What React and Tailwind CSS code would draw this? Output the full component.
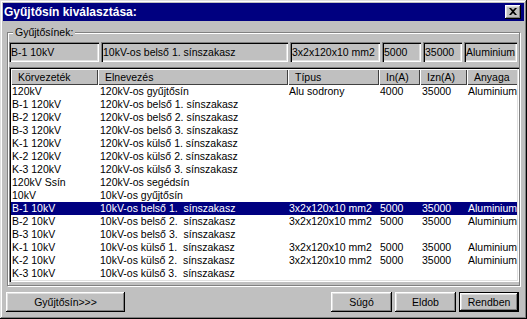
// Gyűjtősín kiválasztása dialog (Win95 style)

const raised =
  'shadow-[inset_-1px_-1px_#000,inset_1px_1px_#fff,inset_-2px_-2px_#808080,inset_2px_2px_#dfdfdf]'
const sunken =
  'shadow-[inset_1px_1px_#808080,inset_2px_2px_#000,inset_-1px_-1px_#fff,inset_-2px_-2px_#dfdfdf]'

const columns = [
  { label: 'Körvezeték', width: 'w-[87px]', pad: 'pl-[1px]' },
  { label: 'Elnevezés', width: 'w-[190px]', pad: 'pl-[2px]' },
  { label: 'Típus', width: 'w-[91px]', pad: 'pl-[1px]' },
  { label: 'In(A)', width: 'w-[41px]', pad: 'pl-[1px]' },
  { label: 'Izn(A)', width: 'w-[47px]', pad: 'pl-[2px]' },
  { label: 'Anyaga', width: 'w-[60px]', pad: 'pl-[1px]' },
]

const sin = ['3x2x120x10 mm2', '5000', '35000', 'Aluminium']

const rows = [
  ['120kV', '120kV-os gyűjtősín', 'Alu sodrony', '4000', '35000', 'Aluminium'],
  ['B-1 120kV', '120kV-os belső 1. sínszakasz'],
  ['B-2 120kV', '120kV-os belső 2. sínszakasz'],
  ['B-3 120kV', '120kV-os belső 3. sínszakasz'],
  ['K-1 120kV', '120kV-os külső 1. sínszakasz'],
  ['K-2 120kV', '120kV-os külső 2. sínszakasz'],
  ['K-3 120kV', '120kV-os külső 3. sínszakasz'],
  ['120kV Ssín', '120kV-os segédsín'],
  ['10kV', '10kV-os gyűjtősín'],
  ['B-1 10kV', '10kV-os belső 1.  sínszakasz', ...sin],
  ['B-2 10kV', '10kV-os belső 2.  sínszakasz', ...sin],
  ['B-3 10kV', '10kV-os belső 3.  sínszakasz'],
  ['K-1 10kV', '10kV-os külső 1.  sínszakasz', ...sin],
  ['K-2 10kV', '10kV-os külső 2.  sínszakasz', ...sin],
  ['K-3 10kV', '10kV-os külső 3.  sínszakasz'],
]

const selectedRow = 9

const fields = [
  { text: 'B-1 10kV', width: 'w-[90px]' },
  { text: '10kV-os belső 1. sínszakasz', width: 'w-[187px]' },
  { text: '3x2x120x10 mm2', width: 'w-[90px]' },
  { text: '5000', width: 'w-[39px]' },
  { text: '35000', width: 'w-[39px]' },
  { text: 'Aluminium', width: 'w-[53px]' },
]

const Button = ({ children, width, isDefault }) => (
  <button
    className={`h-[20px] ${width} bg-[#c0c0c0] text-black flex items-center justify-center ${
      isDefault ? 'border border-black' : ''
    }`}
  >
    <span className={`w-full h-full flex items-center justify-center ${raised}`}>{children}</span>
  </button>
)

const App = () => {
  return (
    <div
      className={`w-[527px] h-[319px] overflow-hidden bg-[#c0c0c0] p-[3px] text-[10.5px] leading-none text-black font-['Liberation_Sans',Arial,sans-serif] shadow-[inset_-1px_-1px_#000,inset_1px_1px_#dfdfdf,inset_-2px_-2px_#808080,inset_2px_2px_#fff]`}
    >
      {/* Title bar */}
      <div className="h-[18px] bg-[#000080] flex items-center justify-between pl-[1px] pr-[3px]">
        <span className="text-white font-bold text-[12px]">Gyűjtősín kiválasztása:</span>
        <div className={`w-[16px] h-[14px] bg-[#c0c0c0] flex items-center justify-center ${raised}`}>
          <svg width="8" height="7" viewBox="0 0 8 7" className="mb-[1px]">
            <path d="M0 0h2l2 2 2-2h2L5 3.5 8 7H6L4 5 2 7H0l3-3.5z" fill="#000" />
          </svg>
        </div>
      </div>

      {/* Group box */}
      <div className="relative mt-[11px] ml-[4px] w-[513px] border border-[#808080] shadow-[1px_1px_0_#fff,inset_1px_1px_0_#fff] pt-[9px] pl-[1px] pb-[3px]">
        <span className="absolute -top-[7px] left-[5px] bg-[#c0c0c0] px-[2px] leading-[13px]">
          Gyűjtősínek:
        </span>

        <div className="flex gap-[2px]">
          {fields.map((f) => (
            <div
              key={f.text}
              className={`${f.width} h-[20px] flex items-center pl-[2px] whitespace-nowrap overflow-hidden ${sunken}`}
            >
              {f.text}
            </div>
          ))}
        </div>

        {/* List */}
        <div className={`mt-[5px] w-[510px] bg-white p-[2px] ${sunken}`}>
          <div className="overflow-hidden bg-white">
            <div className="flex h-[16px] bg-[#c0c0c0]">
              {columns.map((c) => (
                <div
                  key={c.label}
                  className={`${c.width} shrink-0 flex items-center pl-[7px] shadow-[inset_1px_1px_#fff,inset_-1px_-1px_#404040]`}
                >
                  {c.label}
                </div>
              ))}
            </div>
            {rows.map((r, i) => (
              <div
                key={r[0]}
                className={`flex h-[13px] items-center whitespace-pre ${
                  i === selectedRow ? 'bg-[#000080] text-white' : ''
                }`}
              >
                {columns.map((c, j) => (
                  <div key={c.label} className={`${c.width} shrink-0 ${c.pad}`}>
                    {r[j] || ''}
                  </div>
                ))}
              </div>
            ))}
          </div>
        </div>
      </div>

      {/* Buttons */}
      <div className="mt-[6px] flex items-center pl-[3px] pr-[5px]">
        <Button width="w-[119px]">Gyűjtősín&gt;&gt;&gt;</Button>
        <div className="ml-auto flex gap-[3px]">
          <Button width="w-[61px]">Súgó</Button>
          <Button width="w-[61px]">Eldob</Button>
          <Button width="w-[60px]" isDefault>
            Rendben
          </Button>
        </div>
      </div>
    </div>
  )
}

export default App
